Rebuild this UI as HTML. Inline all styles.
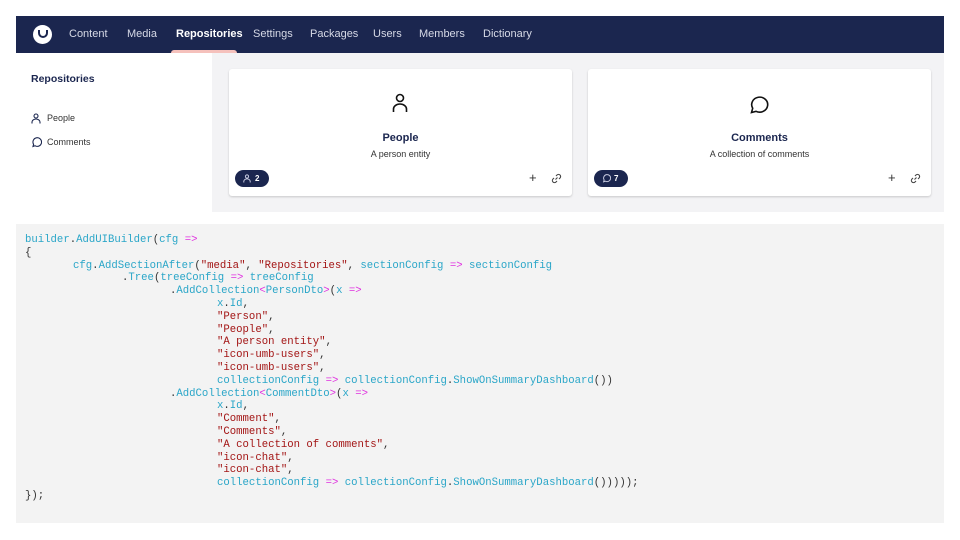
<!DOCTYPE html>
<html><head><meta charset="utf-8"><style>
*{margin:0;padding:0;box-sizing:border-box}
body{width:960px;height:540px;background:#fff;font-family:"Liberation Sans",sans-serif;position:relative;overflow:hidden;color:#1b264f}
.nav{position:absolute;left:16px;top:16px;width:928px;height:37px;background:#1b264f}
.nav .logo{position:absolute;left:17px;top:9px;width:19px;height:19px;border-radius:50%;background:#fff}
.nav .logo:after{content:"";position:absolute;left:5px;top:5px;width:6px;height:6px;border:2.2px solid #1b264f;border-top:none;border-radius:0 0 5px 5px}
.nav span{position:absolute;top:12px;font-size:11px;color:#d6d9e6}
.nav span.a{color:#fff;font-weight:bold}
.nav .ul{position:absolute;left:155px;top:34px;width:66px;height:3px;background:#f5c1bc;border-radius:3px 3px 0 0}
.side{position:absolute;left:16px;top:53px;width:196px;height:159px;background:#fff}
.main{position:absolute;left:212px;top:53px;width:732px;height:159px;background:#f3f3f5}
.card{position:absolute;top:16px;width:343px;height:127px;background:#fff;border-radius:3px;box-shadow:0 1px 2px rgba(0,0,0,.18)}
.card .t{position:absolute;top:63px;width:100%;text-align:center;font-size:11px;font-weight:bold;color:#1b264f}
.card .d{position:absolute;top:80px;width:100%;text-align:center;font-size:9px;color:#333}
.badge{position:absolute;left:6px;top:101px;width:34px;height:17px;border-radius:9px;background:#1b264f;color:#fff;font-size:8px;font-weight:bold}
.code{position:absolute;left:16px;top:224px;width:928px;height:299px;background:#f3f3f3;font-family:"Liberation Mono",monospace;font-size:10.65px;color:#333}
.code div{position:absolute;white-space:pre;line-height:12px}
.c{color:#2aa6c8}.m{color:#e030e0}.s{color:#a31515}
</style></head><body>
<div class="nav"><div class="logo"></div>
<span style="left:53px">Content</span><span style="left:111px">Media</span><span class="a" style="left:160px">Repositories</span><span style="left:237px">Settings</span><span style="left:294px">Packages</span><span style="left:357px">Users</span><span style="left:403px">Members</span><span style="left:467px">Dictionary</span>
<div class="ul"></div></div>
<div class="side">
<div style="position:absolute;left:15px;top:20px;font-size:10.5px;font-weight:bold;color:#1b264f">Repositories</div>
<svg style="position:absolute;left:15px;top:60px" width="10" height="11" viewBox="0 0 10 11" fill="none" stroke="#1b264f" stroke-width="1.1"><circle cx="5" cy="3" r="2"/><path d="M1 10.5V9a4 3 0 0 1 8 0v1.5"/></svg>
<div style="position:absolute;left:31px;top:60px;font-size:9px;color:#333">People</div>
<svg style="position:absolute;left:15px;top:84px" width="11" height="11" viewBox="0 0 11 11" fill="none" stroke="#1b264f" stroke-width="1.1"><path d="M2 9.5l.6-2.2A4.3 4.3 0 1 1 4 8.7z"/></svg>
<div style="position:absolute;left:31px;top:84px;font-size:9px;color:#333">Comments</div>
</div>
<div class="main">
<div class="card" style="left:17px">
<svg style="position:absolute;left:163px;top:24px" width="16" height="20" viewBox="0 0 16 20" fill="none" stroke="#111" stroke-width="1.6"><circle cx="8" cy="5" r="3.5"/><path d="M1.5 19v-3a6.5 5 0 0 1 13 0v3"/></svg>
<div class="t">People</div><div class="d">A person entity</div>
<div class="badge"><svg style="position:absolute;left:8px;top:4px" width="8" height="9" viewBox="0 0 10 11" fill="none" stroke="#c8cbe0" stroke-width="1.2"><circle cx="5" cy="3" r="2"/><path d="M1 10.5V9a4 3 0 0 1 8 0v1.5"/></svg><span style="position:absolute;left:20px;top:4px">2</span></div>
<div style="position:absolute;left:300px;top:101px;font-size:13px;color:#333">+</div>
<svg style="position:absolute;left:322px;top:104px" width="11" height="11" viewBox="0 0 11 11" fill="none" stroke="#444" stroke-width="1.1"><path d="M4.5 6.5l2-2M5 3l1-1a2 2 0 0 1 3 3l-1 1M6 8l-1 1a2 2 0 0 1-3-3l1-1"/></svg>
</div>
<div class="card" style="left:376px">
<svg style="position:absolute;left:161px;top:25px" width="21" height="20" viewBox="0 0 21 20" fill="none" stroke="#111" stroke-width="1.6"><path d="M2.5 18.5l1.2-4.2A8 7.5 0 1 1 7 17.3z"/></svg>
<div class="t">Comments</div><div class="d">A collection of comments</div>
<div class="badge"><svg style="position:absolute;left:8px;top:4px" width="9" height="9" viewBox="0 0 11 11" fill="none" stroke="#c8cbe0" stroke-width="1.2"><path d="M2 9.5l.6-2.2A4.3 4.3 0 1 1 4 8.7z"/></svg><span style="position:absolute;left:20px;top:4px">7</span></div>
<div style="position:absolute;left:300px;top:101px;font-size:13px;color:#333">+</div>
<svg style="position:absolute;left:322px;top:104px" width="11" height="11" viewBox="0 0 11 11" fill="none" stroke="#444" stroke-width="1.1"><path d="M4.5 6.5l2-2M5 3l1-1a2 2 0 0 1 3 3l-1 1M6 8l-1 1a2 2 0 0 1-3-3l1-1"/></svg>
</div>
</div>
<div class="code">
<div style="left:9px;top:10px"><span class="c">builder</span>.<span class="c">AddUIBuilder</span>(<span class="c">cfg</span> <span class="m">=&gt;</span></div>
<div style="left:9px;top:22.8px">{</div>
<div style="left:57px;top:35.6px"><span class="c">cfg</span>.<span class="c">AddSectionAfter</span>(<span class="s">"media"</span>, <span class="s">"Repositories"</span>, <span class="c">sectionConfig</span> <span class="m">=&gt;</span> <span class="c">sectionConfig</span></div>
<div style="left:106px;top:48.4px">.<span class="c">Tree</span>(<span class="c">treeConfig</span> <span class="m">=&gt;</span> <span class="c">treeConfig</span></div>
<div style="left:154px;top:61.2px">.<span class="c">AddCollection</span><span class="m">&lt;</span><span class="c">PersonDto</span><span class="m">&gt;</span>(<span class="c">x</span> <span class="m">=&gt;</span></div>
<div style="left:201px;top:74px"><span class="c">x</span>.<span class="c">Id</span>,</div>
<div style="left:201px;top:86.8px"><span class="s">"Person"</span>,</div>
<div style="left:201px;top:99.6px"><span class="s">"People"</span>,</div>
<div style="left:201px;top:112.4px"><span class="s">"A person entity"</span>,</div>
<div style="left:201px;top:125.2px"><span class="s">"icon-umb-users"</span>,</div>
<div style="left:201px;top:138px"><span class="s">"icon-umb-users"</span>,</div>
<div style="left:201px;top:150.8px"><span class="c">collectionConfig</span> <span class="m">=&gt;</span> <span class="c">collectionConfig</span>.<span class="c">ShowOnSummaryDashboard</span>())</div>
<div style="left:154px;top:163.6px">.<span class="c">AddCollection</span><span class="m">&lt;</span><span class="c">CommentDto</span><span class="m">&gt;</span>(<span class="c">x</span> <span class="m">=&gt;</span></div>
<div style="left:201px;top:176.4px"><span class="c">x</span>.<span class="c">Id</span>,</div>
<div style="left:201px;top:189.2px"><span class="s">"Comment"</span>,</div>
<div style="left:201px;top:202px"><span class="s">"Comments"</span>,</div>
<div style="left:201px;top:214.8px"><span class="s">"A collection of comments"</span>,</div>
<div style="left:201px;top:227.6px"><span class="s">"icon-chat"</span>,</div>
<div style="left:201px;top:240.4px"><span class="s">"icon-chat"</span>,</div>
<div style="left:201px;top:253.2px"><span class="c">collectionConfig</span> <span class="m">=&gt;</span> <span class="c">collectionConfig</span>.<span class="c">ShowOnSummaryDashboard</span>()))));</div>
<div style="left:9px;top:266px">});</div>
</div>
</body></html>
